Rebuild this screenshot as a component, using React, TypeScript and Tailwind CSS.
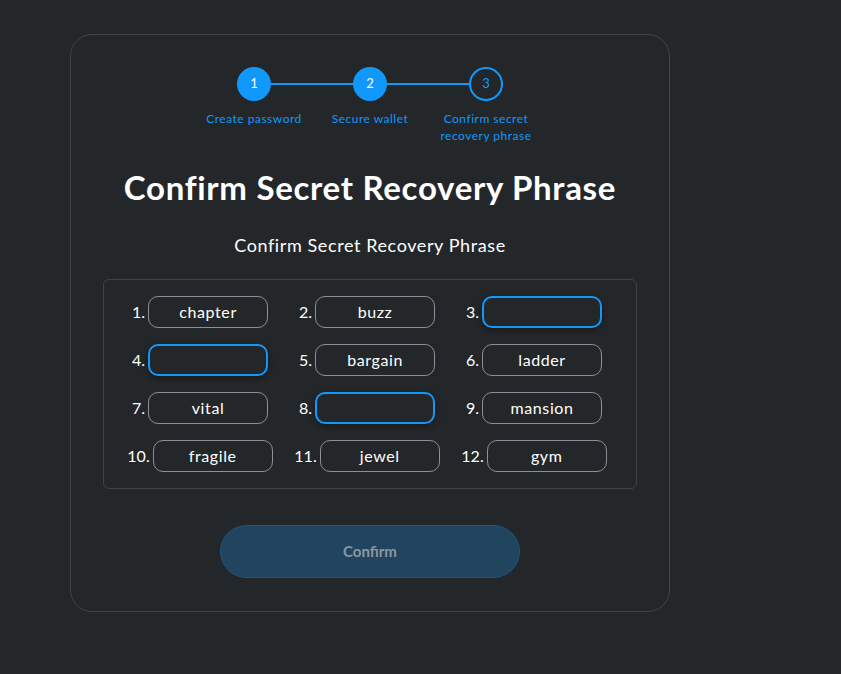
const words: { n: number; word: string; empty?: boolean }[] = [
  { n: 1, word: 'chapter' },
  { n: 2, word: 'buzz' },
  { n: 3, word: '', empty: true },
  { n: 4, word: '', empty: true },
  { n: 5, word: 'bargain' },
  { n: 6, word: 'ladder' },
  { n: 7, word: 'vital' },
  { n: 8, word: '', empty: true },
  { n: 9, word: 'mansion' },
  { n: 10, word: 'fragile' },
  { n: 11, word: 'jewel' },
  { n: 12, word: 'gym' },
];

const steps = [
  { n: 1, label: 'Create password', done: true },
  { n: 2, label: 'Secure wallet', done: true },
  { n: 3, label: 'Confirm secret recovery phrase', done: false },
];

function Stepper() {
  return (
    <div className="flex justify-center">
      {steps.map((s, i) => (
        <div key={s.n} className="relative flex w-[116px] flex-col items-center">
          {i > 0 && <div className="absolute left-[-58px] top-[16px] h-[2px] w-[116px] bg-[#1098fc]" />}
          <div
            className={
              s.done
                ? 'relative z-10 flex h-[34px] w-[34px] items-center justify-center rounded-full bg-[#1098fc] text-[13px] text-white'
                : 'relative z-10 flex h-[34px] w-[34px] items-center justify-center rounded-full border-2 border-[#1098fc] bg-[#24272a] text-[13px] text-[#1098fc]'
            }
          >
            {s.n}
          </div>
          <div className="mt-[9px] w-[108px] text-center text-[12px] leading-[17px] tracking-[0.5px] text-[#1098fc]">
            {s.label}
          </div>
        </div>
      ))}
    </div>
  );
}

function WordCell({ n, word, empty }: { n: number; word: string; empty?: boolean }) {
  return (
    <div className="flex items-center justify-center gap-[3px]">
      <span className="text-[16px] text-white">{n}.</span>
      <div
        className={
          empty
            ? 'flex h-[32px] w-[120px] items-center justify-center rounded-[10px] border-2 border-[#1098fc] shadow-[0_2px_6px_rgba(0,0,0,0.4)]'
            : 'flex h-[32px] w-[120px] items-center justify-center rounded-[10px] border border-[#8a9096] text-[16px] tracking-[0.6px] text-white'
        }
      >
        {word}
      </div>
    </div>
  );
}

export default function App() {
  return (
    <div className="min-h-[674px] bg-[#24272a] pl-[70px] pt-[34px] font-['Lato',sans-serif]">
      <div className="flex w-[600px] flex-col items-center rounded-[22px] border border-[#3f4449] pb-[33px] pt-[32px]">
        <Stepper />
        <h1 className="mt-[23px] text-[33px] font-bold leading-[40px] tracking-[0.7px] text-white">
          Confirm Secret Recovery Phrase
        </h1>
        <p className="mt-[26px] text-[18px] leading-[24px] tracking-[0.6px] text-white">Confirm Secret Recovery Phrase</p>
        <div className="mt-[22px] grid w-[534px] grid-cols-[167px_167px_167px] justify-center gap-y-[16px] rounded-[6px] border border-[#3f4449] py-[16px] pl-[12px] pr-[18px]">
          {words.map((w) => (
            <WordCell key={w.n} {...w} />
          ))}
        </div>
        <button className="mt-[36px] h-[53px] w-[300px] rounded-full border border-[#1c5580] bg-[#21445f] text-[15px] font-bold text-[#8d969e]">
          Confirm
        </button>
      </div>
    </div>
  );
}
